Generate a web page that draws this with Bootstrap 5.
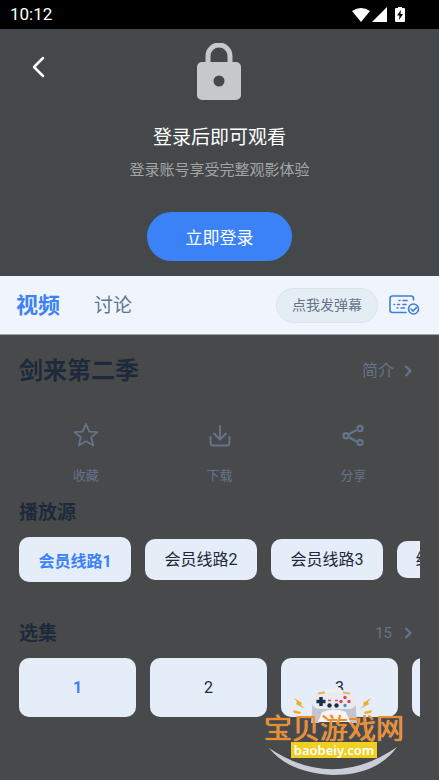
<!DOCTYPE html>
<html lang="zh-CN">
<head>
<meta charset="utf-8">
<meta name="viewport" content="width=device-width, initial-scale=1">
<title>剑来第二季</title>
<link href="https://cdn.jsdelivr.net/npm/bootstrap@5.3.0/dist/css/bootstrap.min.css" rel="stylesheet">
<style>
  :root { --brand: #3b82f6; --ink: #1e293b; --muted: #64748b; --tile: #e5edf8; }
  body { font-family: Roboto, "Noto Sans CJK SC", sans-serif; background: #48494a; color: var(--ink); overflow-x: hidden; }
  button { font-family: inherit; }
  svg { display: block; flex: none; }
  .statusbar { background: #000; height: 29px; padding: 0 34px 0 10px; font-size: 17px; }
  .hero { background: #45484a; display: grid; grid-template-columns: 1fr auto 1fr; padding: 14px 0 15px; }
  .back { margin: 10px 0 0 27px; width: 24px; height: 28px; }
  .hero-title { font-size: 19px; line-height: 28px; margin: 24px 0 8px; }
  .hero-sub { font-size: 15px; line-height: 20px; color: #a3a5a6; margin-bottom: 32px; }
  .login { width: 145px; height: 49px; font-size: 17px; background: var(--brand); color: #fff; }
  .login:hover { background: #2f74e8; color: #fff; }
  .tabbar { background: #f0f5fd; height: 59px; border-bottom: 1px solid #a0a3a8; padding: 0 19px 0 16px; }
  .tabs { gap: 34px; padding-top: 2px; }
  .tab { font-size: 19px; color: var(--muted); line-height: 28px; }
  .tab.current { font-size: 22px; font-weight: 700; color: var(--brand); }
  .danmaku { width: 102px; height: 35px; font-size: 14px; background: #e4ecf4; color: var(--muted); border: 1px solid #dce4ec; }
  .content { padding: 16px 19px 0; }
  .show-title { font-size: 24px; line-height: 40px; font-weight: 700; }
  .more { color: var(--muted); font-size: 16px; gap: 10px; padding-right: 8px; }
  .more.count { font-size: 15px; gap: 12px; }
  .actions { margin: 32px 0 12px; }
  .action { color: var(--muted); font-size: 13px; line-height: 18px; gap: 20px; }
  .section-title { font-size: 19px; line-height: 28px; font-weight: 700; padding-top: 2px; }
  .strip { gap: 14px; margin-top: 10px; overflow: hidden; }
  .tile { background: var(--tile); color: var(--ink); border-radius: 10px; font-size: 16px; flex: none; white-space: nowrap; }
  .tile.current { color: var(--brand); font-weight: 700; }
  .source { width: 112px; height: 41px; }
  .source.current { height: 45px; }
  .source.short { width: 78px; height: 37px; }
  .episode { width: 117px; height: 59px; }
  .episodes-head { margin-top: 36px; }
  .watermark { position: absolute; top: 27px; right: 16px; width: 140px; height: 92px; padding-top: 28px; pointer-events: none; }
  .watermark svg { position: absolute; top: 0; left: 0; }
  .site-name { position: relative; font-family: "Noto Sans CJK SC", sans-serif; font-size: 28px; line-height: 29px; font-weight: 400; color: #f08c28; text-shadow: 0 0 1px #ffd9a0; white-space: nowrap; }
  .site-url { position: relative; background: #f0cf22; color: #fff; font-family: "Noto Sans", sans-serif; font-weight: 600; font-size: 13px; line-height: 16px; width: 86px; text-align: center; }
</style>
<script src="https://cdn.jsdelivr.net/npm/bootstrap@5.3.0/dist/js/bootstrap.bundle.min.js"></script>
</head>
<body>
<div class="min-vh-100">
  <div class="statusbar d-flex align-items-center justify-content-between text-white">
    <span>10:12</span>
    <svg width="54" height="18" viewBox="0 0 54 18" fill="#fff" aria-hidden="true">
      <path d="M1 5Q10-1 19 5L10 16Z"/>
      <path d="M21 16L36 1V16Z"/>
      <path d="M47 1h4v1h2q1 0 1 1v12q0 1-1 1h-8q-1 0-1-1V3q0-1 1-1h2z"/>
      <path d="M50 4l-4 5.500h2.500l-.5 4.500 4-6h-2.500z" fill="#000"/>
    </svg>
  </div>

  <header class="hero">
    <button class="back btn border-0 p-0 text-white" aria-label="返回">
      <svg width="24" height="28" viewBox="0 0 24 28" fill="none" stroke="currentColor" stroke-width="2.500" stroke-linecap="round" stroke-linejoin="round"><path d="M16 5L7 14l9 9"/></svg>
    </button>
    <div class="d-flex flex-column align-items-center text-center">
      <svg width="44" height="57" viewBox="0 0 44 57" aria-hidden="true">
        <path d="M11 22V13a11 11 0 0 1 22 0v9" fill="none" stroke="#c7c8ca" stroke-width="5"/>
        <path fill="#c7c8ca" fill-rule="evenodd" d="M5 19h34a5 5 0 0 1 5 5v28a5 5 0 0 1-5 5H5a5 5 0 0 1-5-5V24a5 5 0 0 1 5-5zm17 13.500a5.500 5.500 0 1 0 0 11 5.500 5.500 0 0 0 0-11z"/>
      </svg>
      <p class="hero-title text-white">登录后即可观看</p>
      <p class="hero-sub">登录账号享受完整观影体验</p>
      <button class="login btn rounded-pill border-0 px-0 pt-1 pb-0">立即登录</button>
    </div>
    <span></span>
  </header>

  <nav class="tabbar d-flex align-items-center">
    <div class="tabs d-flex align-items-center me-auto">
      <button class="tab current btn border-0 p-0">视频</button>
      <button class="tab btn border-0 p-0">讨论</button>
    </div>
    <button class="danmaku btn rounded-pill p-0">点我发弹幕</button>
    <button class="btn border-0 p-0 ms-2" aria-label="弹幕设置">
      <svg width="34" height="22" viewBox="0 0 34 22" fill="none" stroke="#3f7fdc" stroke-width="1.600" stroke-linecap="round">
        <path d="M20 18.500H6.500A2.500 2.500 0 0 1 4 16V4.500A2.500 2.500 0 0 1 6.500 2H25a2.500 2.500 0 0 1 2.500 2.500V6"/>
        <path d="M13 6.500h1M17 6.500h4M8 10.500h.5M11.500 10.500h2M17 10.500h3M11 14h1M15 14h3.500"/>
        <circle cx="27.500" cy="15" r="5"/><path d="M25 15l2 2 3.500-3.500"/>
      </svg>
    </button>
  </nav>

  <main class="content">
    <div class="d-flex justify-content-between align-items-center">
      <h1 class="show-title m-0">剑来第二季</h1>
      <button class="more btn border-0 py-0 ps-0 d-flex align-items-center">简介
        <svg width="8" height="12" viewBox="0 0 8 12" fill="none" stroke="currentColor" stroke-width="2.200"><path d="M1.500 1l5 5-5 5"/></svg>
      </button>
    </div>

    <div class="actions row g-0">
      <div class="col"><button class="action btn border-0 p-0 w-100 d-flex flex-column align-items-center">
        <svg width="26" height="24" viewBox="0 0 26 24" fill="none" stroke="currentColor" stroke-width="1.800" stroke-linejoin="round"><path d="M13 1l3.300 7.700 8.200.4-6.300 5.200 2.100 8.200-7.300-4.300-7.300 4.300 2.100-8.200L1.500 9.100l8.200-.4z"/></svg>
        <span>收藏</span></button></div>
      <div class="col"><button class="action btn border-0 p-0 w-100 d-flex flex-column align-items-center">
        <svg width="24" height="24" viewBox="0 0 24 24" fill="none" stroke="currentColor" stroke-width="1.900" stroke-linecap="round" stroke-linejoin="round"><path d="M12 3v13M6 10.500l6 6 6-6M2.500 14v5.500a3 3 0 0 0 3 3h13a3 3 0 0 0 3-3V14"/></svg>
        <span>下载</span></button></div>
      <div class="col"><button class="action btn border-0 p-0 w-100 d-flex flex-column align-items-center">
        <svg width="24" height="24" viewBox="0 0 24 24" fill="none" stroke="currentColor" stroke-width="2.200"><path d="M7.500 11.500l8-4.500M7.500 14l8 4.500"/><circle cx="5" cy="12.800" r="2.600"/><circle cx="19" cy="5.500" r="2.600"/><circle cx="19" cy="19.500" r="2.600"/></svg>
        <span>分享</span></button></div>
    </div>

    <h2 class="section-title m-0">播放源</h2>
    <div class="strip d-flex align-items-center">
      <button class="tile source current btn border-0 px-0 pt-1 pb-0">会员线路1</button>
      <button class="tile source btn border-0 p-0">会员线路2</button>
      <button class="tile source btn border-0 p-0">会员线路3</button>
      <button class="tile source short btn border-0 p-0">线路4</button>
    </div>

    <div class="episodes-head d-flex justify-content-between align-items-center">
      <h2 class="section-title m-0">选集</h2>
      <button class="more count btn border-0 py-0 ps-0 d-flex align-items-center">15
        <svg width="8" height="12" viewBox="0 0 8 12" fill="none" stroke="currentColor" stroke-width="2.200"><path d="M1.500 1l5 5-5 5"/></svg>
      </button>
    </div>
    <div class="position-relative">
      <div class="strip d-flex">
        <button class="tile episode current btn border-0 p-0">1</button>
        <button class="tile episode btn border-0 p-0">2</button>
        <button class="tile episode btn border-0 p-0">3</button>
        <button class="tile episode btn border-0 p-0">4</button>
      </div>
      <div class="watermark d-flex flex-column align-items-center">
        <svg width="140" height="92" viewBox="0 0 140 92" aria-hidden="true">
          <path d="M5 63Q69 106 133 62Q113 90 69 90Q25 88 5 63Z" fill="#cbccda"/>
          <ellipse cx="70" cy="20" rx="17" ry="17" fill="#efeff0"/>
          <path d="M52 11q-4 4-4 15l-1 12h8l5-10h20l5 10h8l-1-12q0-11-4-15-18-5-36 0z" fill="#c2c4ce"/>
          <path d="M53 9.500q17-3 34 0 6 2 5 8.500-1 6-8 6H57q-8 0-9-6-1-6 5-8.500z" fill="#e9ebf1"/>
          <path d="M58 27q12-5 24 0l4 10H54z" fill="#f5f4f3"/>
          <path d="M54 8.500l7-1M79 7.500l7 1" stroke="#e9b94b" stroke-width="2"/>
          <path d="M57 12v9M52.500 16.500h9" stroke="#1c3043" stroke-width="3.500"/>
          <g fill="#1c3043"><circle cx="65.500" cy="20.500" r="2.200"/><circle cx="72.500" cy="20.500" r="2.200"/></g>
          <path d="M64 15.500h3M71 15.500h3" stroke="#d94b62" stroke-width="1.500"/>
          <g><circle cx="81" cy="12.500" r="1.700" fill="#d9435a"/><circle cx="81" cy="20.500" r="1.700" fill="#3a9ab8"/><circle cx="77" cy="16.500" r="1.700" fill="#d9435a"/><circle cx="85" cy="16.500" r="1.700" fill="#d9435a"/></g>
          <path d="M30 13l8 5-1 2 4 4-9-5 1-2zM107 13l-8 5 1 2-4 4 9-5-1-2zM29 25l8 2-1 2-6-1zM108 25l-8 2 1 2 6-1z" fill="#efad27"/>
        </svg>
        <div class="site-name">宝贝游戏网</div>
        <div class="site-url">baobeiy.com</div>
      </div>
    </div>
  </main>
</div>
</body>
</html>
